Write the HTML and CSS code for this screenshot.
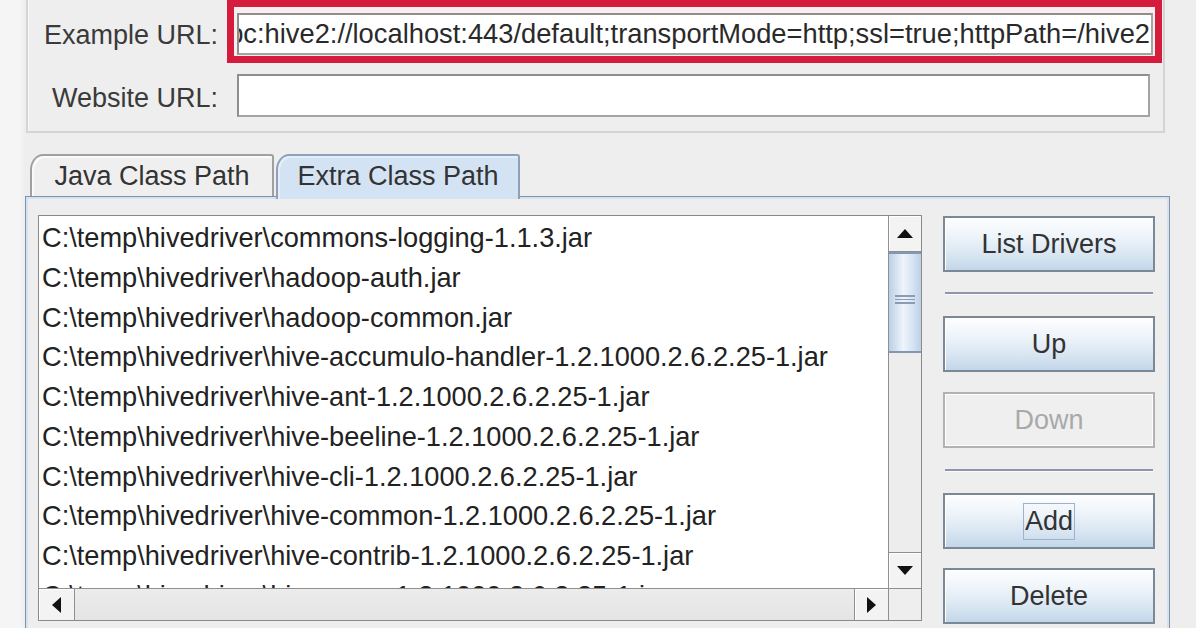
FILE: index.html
```html
<!DOCTYPE html>
<html>
<head>
<meta charset="utf-8">
<link rel="stylesheet" href="styles.css">
</head>
<body>
<div class="page">
  <div class="toppanel">
    <div class="label">Example URL:</div>
    <div class="redbox">
      <div class="field clip"><span>jdbc:hive2://localhost:443/default;transportMode=http;ssl=true;httpPath=/hive2</span></div>
    </div>
    <div class="label lower">Website URL:</div>
    <div class="field site"></div>
  </div>

  <div class="tabs">
    <div class="tab">Java Class Path</div>
    <div class="tab sel">Extra Class Path</div>
  </div>

  <div class="tabpanel">
    <div class="scrollpane">
      <div class="list">
        <div class="row">C:\temp\hivedriver\commons-logging-1.1.3.jar</div>
        <div class="row">C:\temp\hivedriver\hadoop-auth.jar</div>
        <div class="row">C:\temp\hivedriver\hadoop-common.jar</div>
        <div class="row">C:\temp\hivedriver\hive-accumulo-handler-1.2.1000.2.6.2.25-1.jar</div>
        <div class="row">C:\temp\hivedriver\hive-ant-1.2.1000.2.6.2.25-1.jar</div>
        <div class="row">C:\temp\hivedriver\hive-beeline-1.2.1000.2.6.2.25-1.jar</div>
        <div class="row">C:\temp\hivedriver\hive-cli-1.2.1000.2.6.2.25-1.jar</div>
        <div class="row">C:\temp\hivedriver\hive-common-1.2.1000.2.6.2.25-1.jar</div>
        <div class="row">C:\temp\hivedriver\hive-contrib-1.2.1000.2.6.2.25-1.jar</div>
        <div class="row">C:\temp\hivedriver\hive-exec-1.2.1000.2.6.2.25-1.jar</div>
      </div>
      <div class="vscroll">
        <div class="sbtn vup"><svg width="16" height="9" viewBox="0 0 16 9"><polygon points="8,0 16,9 0,9" fill="#111"/></svg></div>
        <div class="vthumb"><span class="grip"></span></div>
        <div class="vtrack"></div>
        <div class="sbtn vdown"><svg width="16" height="9" viewBox="0 0 16 9"><polygon points="0,0 16,0 8,9" fill="#111"/></svg></div>
      </div>
      <div class="hscroll">
        <div class="sbtn hleft"><svg width="9" height="16" viewBox="0 0 9 16"><polygon points="9,0 9,16 0,8" fill="#111"/></svg></div>
        <div class="htrack"></div>
        <div class="sbtn hright"><svg width="9" height="16" viewBox="0 0 9 16"><polygon points="0,0 9,8 0,16" fill="#111"/></svg></div>
      </div>
      <div class="corner"></div>
    </div>

    <div class="buttons">
      <div class="btn">List Drivers</div>
      <div class="sep"></div>
      <div class="btn">Up</div>
      <div class="btn dis">Down</div>
      <div class="sep sep2"></div>
      <div class="btn"><span class="focus">Add</span></div>
      <div class="btn del">Delete</div>
    </div>
  </div>
</div>
</body>
</html>
```
FILE: styles.css
```css
* { box-sizing: border-box; }
html, body { margin: 0; padding: 0; }
body {
  width: 1196px;
  height: 628px;
  overflow: hidden;
  background: linear-gradient(to right, #f5f5f5 0, #f5f5f5 20px, #eeeeee 25px);
  font-family: "Liberation Sans", Arial, sans-serif;
  font-size: 27px;
  color: #333;
}
.page {
  width: 1170px;
  padding-left: 25px;
}

/* top panel */
.toppanel {
  margin: -22px 5px 0 1px;
  padding: 20px 0 14px 0;
  border: 2px solid #d4d4d4;
  box-shadow: inset 1px 1px 0 #f8f8f8;
  background: #eeeeee;
  display: grid;
  grid-template-columns: 190px minmax(0, 1fr);
  grid-template-rows: 63px 43px;
  row-gap: 11px;
}
.label {
  text-align: right;
  align-self: center;
  padding-top: 7px;
  color: #3a3a3a;
  white-space: nowrap;
}
.label.lower { padding-top: 5px; }
.redbox {
  min-width: 0;
  margin: 0 1px 0 9px;
  border: 7px solid #d51c3d;
  padding: 6px 2px 1px 3px;
  background: #f7eef0;
}
.field {
  min-width: 0;
  height: 43px;
  background: #fff;
  border: 2px solid #a4a4a4;
  border-top-color: #8e8e8e;
  border-left-color: #8e8e8e;
}
.redbox .field { height: 42px; }
.clip {
  display: flex;
  justify-content: flex-end;
  align-items: center;
  overflow: hidden;
  white-space: nowrap;
  padding-right: 1px;
  color: #2a2a2a;
  font-size: 27.3px;
}
.clip span { flex: none; }
.site {
  margin: 0 13px 0 19px;
}

/* tabs */
.tabs {
  display: flex;
  gap: 2px;
  margin-top: 21px;
  padding-left: 5px;
  height: 42px;
  align-items: flex-start;
}
.tab {
  width: 244px;
  height: 42px;
  border: 2px solid #a0a0a0;
  border-bottom: none;
  border-radius: 13px 3px 0 0 / 16px 3px 0 0;
  background: #efefef;
  box-shadow: inset 2px 2px 0 #fafafa;
  display: flex;
  align-items: center;
  justify-content: center;
  padding-bottom: 0;
  color: #333;
  white-space: nowrap;
}
.tab.sel {
  height: 45px;
  padding-bottom: 3px;
  background: #d4e3f3;
  border-color: #8da2ba;
  box-shadow: inset 2px 2px 0 #e4eef9;
  position: relative;
  z-index: 1;
}

/* tab panel */
.tabpanel {
  height: 460px;
  border: 1px solid #7f92a8;
  box-shadow: inset 0 0 0 2px #d4e3f3;
  padding: 18px 14px 0 12px;
  display: flex;
  gap: 21px;
  background: #eeeeee;
}
.scrollpane {
  flex: none;
  width: 884px;
  height: 406px;
  border: 1px solid #8a8a8a;
  background: #fff;
  display: grid;
  grid-template-columns: minmax(0, 1fr) 33px;
  grid-template-rows: minmax(0, 1fr) 32px;
  overflow: hidden;
}
.list {
  overflow: hidden;
  padding: 2px 0 0 3px;
  color: #222;
  font-size: 27.2px;
}
.row {
  line-height: 39.75px;
  white-space: nowrap;
}
.vscroll {
  border-left: 1px solid #8f8f8f;
  background: #ececec;
  display: flex;
  flex-direction: column;
}
.sbtn {
  flex: none;
  background: #f3f3f3;
  box-shadow: inset 1px 1px 0 #fff;
  display: flex;
  align-items: center;
  justify-content: center;
}
.vup { height: 36px; border-bottom: 1px solid #8f8f8f; }
.vdown { height: 36px; border-top: 1px solid #8f8f8f; }
.vthumb {
  flex: none;
  height: 101px;
  border-top: 2px solid #8397b1;
  border-bottom: 2px solid #8397b1;
  background: linear-gradient(to right, #bccfe6 0%, #eef4fb 45%, #d6e3f2 75%, #bcd0e8 100%);
  display: flex;
  align-items: center;
  justify-content: center;
}
.grip {
  width: 20px;
  height: 9px;
  border-top: 2px solid #8a9cb6;
  border-bottom: 2px solid #8a9cb6;
  background: linear-gradient(#8a9cb6, #8a9cb6) center / 100% 1px no-repeat;
  margin-top: -6px;
}
.vtrack { flex: 1; background: #ededed; }
.hscroll {
  border-top: 1px solid #8f8f8f;
  display: flex;
  background: #e8e8e8;
}
.hleft { width: 36px; border-right: 1px solid #8f8f8f; }
.hright { width: 34px; border-left: 1px solid #8f8f8f; }
.htrack {
  flex: 1;
  background: linear-gradient(#ececec, #e4e4e4);
}
.corner {
  border-left: 1px solid #8f8f8f;
  border-top: 1px solid #8f8f8f;
  background: #eeeeee;
}

/* buttons */
.buttons {
  flex: none;
  width: 212px;
  margin-top: 1px;
  display: flex;
  flex-direction: column;
}
.btn {
  flex: none;
  height: 56px;
  border: 2px solid #7b8896;
  background: linear-gradient(to bottom, #fdfeff 0%, #eef4fa 35%, #d9e6f2 70%, #c3d6ea 100%);
  box-shadow: inset 1px 1px 0 #fff;
  display: flex;
  align-items: center;
  justify-content: center;
  color: #333;
  white-space: nowrap;
}
.btn + .btn { margin-top: 20px; }
.btn.del { margin-top: 19px; }
.btn.dis {
  background: #efefef;
  border-color: #b2b2b2;
  box-shadow: inset 1px 1px 0 #fff, inset -1px -1px 0 #fff;
  color: #a9a9a9;
}
.sep {
  flex: none;
  height: 2px;
  margin: 20px 2px 22px;
  background: #8f95ab;
  box-shadow: 0 1px 0 #fbfbfb;
}
.sep2 { margin-top: 21px; margin-bottom: 22px; }
.focus {
  border: 1px solid #9db2cc;
  padding: 1px 1px 2px;
  line-height: 32px;
}
```
